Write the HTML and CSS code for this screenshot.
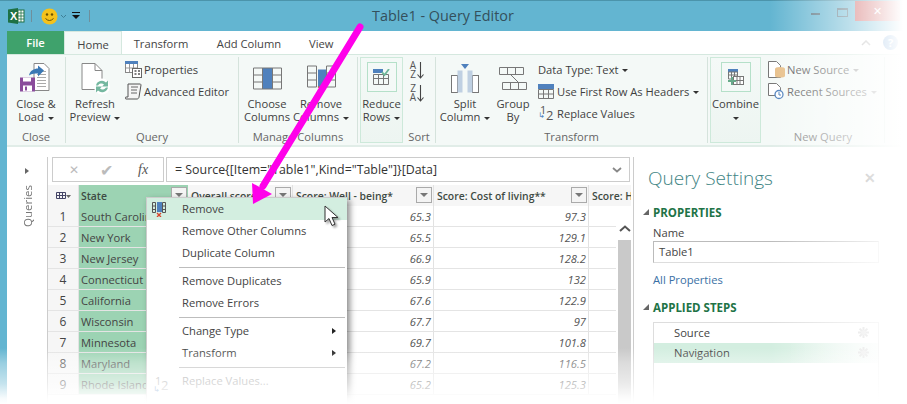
FILE: index.html
```html
<!DOCTYPE html>
<html lang="en">
<head>
<meta charset="utf-8">
<title>Table1 - Query Editor</title>
<link rel="stylesheet" href="styles.css">
</head>
<body>
<div class="window">
  <header class="titlebar">
    <div class="qat">
      <svg class="xl" width="17" height="16" viewBox="0 0 17 16"><rect x="7" y="2" width="9" height="12" fill="#fff" stroke="#1e7145"/><path d="M10 2v12M13 2v12M7 5h9M7 8h9M7 11h9" stroke="#1e7145" stroke-width=".8"/><path d="M0 1.500 10 0v16L0 14.500z" fill="#1e7145"/><text x="2" y="12" class="xl-x">X</text></svg>
      <i class="qat-sep"></i>
      <svg class="smile" width="17" height="17" viewBox="0 0 17 17"><circle cx="8.500" cy="8.500" r="8" fill="#f5c21b"/><circle cx="6" cy="6.500" r="1.200" fill="#6b5200"/><circle cx="11" cy="6.500" r="1.200" fill="#6b5200"/><path d="M4.500 10.500q4 4 8 0" fill="none" stroke="#6b5200" stroke-width="1"/></svg>
      <svg class="chev" width="7" height="5" viewBox="0 0 7 5"><path d="M1 1l2.500 2.500L6 1" fill="none" stroke="#3e7f96"/></svg>
      <svg class="qat-more" width="8" height="8" viewBox="0 0 8 8"><path d="M0 .5h8" stroke="#111"/><path d="M0 3h8L4 7z" fill="#111"/></svg>
      <i class="qat-sep qat-sep2"></i>
    </div>
    <div class="title">Table1 - Query Editor</div>
    <div class="winctl">
      <i class="min"></i><i class="max"></i><span class="close">✕</span>
    </div>
  </header>
  <div class="main">
    <nav class="tabs">
      <span class="tab file">File</span>
      <span class="tab home">Home</span>
      <span class="tab t-transform">Transform</span>
      <span class="tab t-add">Add Column</span>
      <span class="tab t-view">View</span>
      <span class="tabs-right">
        <svg width="10" height="6" viewBox="0 0 10 6"><path d="M1 5l4-4 4 4" fill="none" stroke="#aaa" stroke-width="1.500"/></svg>
        <span class="help">?</span>
      </span>
    </nav>
    <section class="ribbon">
      <div class="group g-close">
        <div class="gbody">
          <div class="big w58">
            <svg class="ico" width="32" height="32" viewBox="0 0 32 32"><path d="M14 1h10l5 5v22H14z" fill="#fff" stroke="#888"/><path d="M17 9h9M17 12h9M17 15h9M17 18h9M17 21h9M17 24h9" stroke="#aaa"/><path d="M9 13c1-5 5-7 9-7V3l6 5-6 6v-3c-3 0-6 0-9 2z" fill="#3a78b5"/><path d="M0 15h15v14H0z" fill="#8a4c9c"/><path d="M3 15h8v4H3zM3 23h9v6H3z" fill="#fff"/><path d="M5 24h2v4H5z" fill="#8a4c9c"/></svg>
            <span class="blabel">Close &amp;<br>Load <i class="caret"></i></span>
          </div>
        </div>
        <div class="glabel">Close</div>
      </div>
      <div class="group g-query">
        <div class="gbody">
          <div class="big w58">
            <svg class="ico" width="30" height="32" viewBox="0 0 30 32"><path d="M2 1h13l7 7v19H2z" fill="#fff" stroke="#888"/><path d="M15 1v7h7" fill="none" stroke="#888"/><circle cx="22" cy="24" r="8" fill="#fff"/><path d="M16 23a6 6 0 0 1 10-3l2-2v6h-6l2-2a4 4 0 0 0-6 1zM28 25a6 6 0 0 1-10 3l-2 2v-6h6l-2 2a4 4 0 0 0 6-1z" fill="#75b8a0"/></svg>
            <span class="blabel">Refresh<br>Preview <i class="caret"></i></span>
          </div>
          <div class="smalls">
            <div class="sitem"><svg width="17" height="17" viewBox="0 0 17 17"><rect x=".5" y=".5" width="12" height="11" fill="#fff" stroke="#888"/><rect x="0" y="0" width="13" height="3" fill="#4f81bd"/><path d="M4.500 3v8M8.500 3v8M1 7h11" stroke="#999"/><rect x="7.500" y="7.500" width="9" height="9" fill="#fff" stroke="#666"/><path d="M9.500 10h2M9.500 13h2M13 10h2M13 13h2" stroke="#555" stroke-width="1.500"/></svg><span>Properties</span></div>
            <div class="sitem"><svg width="17" height="17" viewBox="0 0 17 17"><path d="M3 14V1h12c1 0 1 1 1 1l-2 12c0 1-1 2-2 2H1c-1 0-1-2 0-2z" fill="#f5f5f5" stroke="#555"/><path d="M6 4h7M6 7h6M6 10h6" stroke="#666"/></svg><span>Advanced Editor</span></div>
          </div>
        </div>
        <div class="glabel">Query</div>
      </div>
      <div class="group g-manage">
        <div class="gbody">
          <div class="big w54">
            <svg class="ico" width="29" height="22" viewBox="0 0 29 22"><rect x="9.500" y=".5" width="10" height="21" fill="#4f81bd"/><path d="M.5.500h28v21H.5zM9.500.5v21M19.500.5v21M.5 7.500h9M.5 14.500h9M19.500 7.500h9M19.500 14.500h9" fill="none" stroke="#777"/></svg>
            <span class="blabel">Choose<br>Columns</span>
          </div>
          <div class="big w54">
            <svg class="ico" width="29" height="26" viewBox="0 0 29 26"><path d="M.5.500h9v21h-9zM.5 7.500h9M.5 14.500h9M19.500.500h9v21h-9zM19.500 7.500h9M19.500 14.500h9" fill="none" stroke="#777"/><rect x="11" y="4" width="8" height="18" fill="#4f81bd"/><path d="M11 21l5 4M16 21l-5 4" stroke="#d2603c" stroke-width="1.500"/></svg>
            <span class="blabel">Remove<br>Columns <i class="caret"></i></span>
          </div>
        </div>
        <div class="glabel">Manage Columns</div>
      </div>
      <div class="group g-reduce">
        <div class="hi-box"><svg width="17" height="16" viewBox="0 0 17 16"><rect y="0" width="10" height="4" fill="#4f81bd"/><path d="M.5 5.500h15v10H.5zM.5 9.500h15M5.500 5.500v10M10.500 5.500v10" fill="none" stroke="#777"/><path d="M9 3l2.500 3L16 0" fill="none" stroke="#6fb79a" stroke-width="1.800"/></svg></div>
        <span class="blabel reduce-label">Reduce<br>Rows <i class="caret"></i></span>
      </div>
      <div class="group g-sort">
        <div class="gbody sort-body">
          <div class="sortrow"><span class="az">A<br>Z</span><svg width="7" height="17" viewBox="0 0 7 17"><path d="M3.500 0v16M.5 12.500l3 3.500 3-3.500" fill="none" stroke="#444" stroke-width="1.100"/></svg></div>
          <div class="sortrow"><span class="az">Z<br>A</span><svg width="7" height="17" viewBox="0 0 7 17"><path d="M3.500 0v16M.5 12.500l3 3.500 3-3.500" fill="none" stroke="#444" stroke-width="1.100"/></svg></div>
        </div>
        <div class="glabel">Sort</div>
      </div>
      <div class="group g-transform">
        <div class="gbody">
          <div class="big w58">
            <svg class="ico" width="28" height="29" viewBox="0 0 28 29"><path d="M10 0h8l-4 5z" fill="#4f81bd"/><rect x=".5" y="11.500" width="6" height="17" fill="#fff" stroke="#777"/><rect x="21.500" y="11.500" width="6" height="17" fill="#fff" stroke="#777"/><rect x="6.500" y="6.500" width="5" height="22" fill="#bfd0e2"/><rect x="16.500" y="6.500" width="5" height="22" fill="#bfd0e2"/></svg>
            <span class="blabel">Split<br>Column <i class="caret"></i></span>
          </div>
          <div class="big w38">
            <svg class="ico" width="28" height="23" viewBox="0 0 28 23"><path d="M.5.500h24v7H.5zM8.500.5v7M16.500.5v7M3.500 15.500h24v7h-24zM11.500 15.500v7M19.500 15.500v7M12 8l7 7" fill="none" stroke="#777"/></svg>
            <span class="blabel">Group<br>By</span>
          </div>
          <div class="smalls s-tr">
            <div class="sitem"><span>Data Type: Text <i class="caret"></i></span></div>
            <div class="sitem"><svg width="16" height="15" viewBox="0 0 16 15"><rect width="16" height="5" fill="#4f81bd"/><path d="M.5 5.500h15v9H.5zM.5 10h15M5.500 5.500v9M10.500 5.500v9" fill="none" stroke="#777"/></svg><span>Use First Row As Headers <i class="caret"></i></span></div>
            <div class="sitem"><span class="onetwo"><em>1</em><u>↳</u><em>2</em></span><span>Replace Values</span></div>
          </div>
        </div>
        <div class="glabel">Transform</div>
      </div>
      <div class="group g-combine">
        <div class="hi-box"><svg width="16" height="16" viewBox="0 0 16 16"><rect width="10" height="3" fill="#4f81bd"/><path d="M.5 3h9v7h-9zM3.500 3v7M6.500 3v7M.5 6h9" fill="none" stroke="#777"/><rect x="5.500" y="7.500" width="10" height="8" fill="#fff" stroke="#777"/><path d="M9 7.500v8M12 7.500v8M5.500 11.500h10" stroke="#777"/><path d="M0 12h8M4 8v8" stroke="#67a98a" stroke-width="2"/></svg></div>
        <span class="blabel reduce-label">Combine<br><i class="caret"></i></span>
      </div>
      <div class="group g-new">
        <div class="gbody">
          <div class="smalls s-new">
            <div class="sitem"><svg width="17" height="18" viewBox="0 0 17 18"><path d="M.5 1.500h8l4 4v12h-12z" fill="#fff" stroke="#777"/><ellipse cx="12" cy="9" rx="5" ry="2" fill="#e8c08a"/><path d="M7 9h10v7c0 2-10 2-10 0z" fill="#e8c08a"/></svg><span>New Source <i class="caret"></i></span></div>
            <div class="sitem"><svg width="17" height="18" viewBox="0 0 17 18"><path d="M.5 1.500h8l4 4v8h-12z" fill="#fff" stroke="#777"/><circle cx="11" cy="12.500" r="4" fill="#fff" stroke="#4f81bd" stroke-width="1.300"/><path d="M11 10v3h2" stroke="#4f81bd" fill="none"/></svg><span>Recent Sources <i class="caret"></i></span></div>
          </div>
        </div>
        <div class="glabel faint">New Query</div>
      </div>
    </section>
    <div class="workspace">
      <aside class="queries">
        <i class="qarrow"></i>
        <span class="qlabel">Queries</span>
      </aside>
      <div class="center">
        <div class="formula">
          <div class="fxbox"><span class="fxx">✕</span><span class="fxc">✔</span><span class="fxf">fx</span></div>
          <div class="fxinput"><span>= Source{[Item="Table1",Kind="Table"]}[Data]</span><svg width="10" height="6" viewBox="0 0 10 6"><path d="M1 1l4 3.500L9 1" fill="none" stroke="#888" stroke-width="1.800"/></svg></div>
        </div>
        <div class="grid">
          <div class="row head">
            <div class="c num"><svg width="15" height="7" viewBox="0 0 15 7"><path d="M.5.500h9v6h-9zM3.500.5v6M6.500.5v6M.5 3.500h9" fill="none" stroke="#446"/><path d="M10 3h5l-2.500 3z" fill="#666"/></svg></div>
            <div class="c state"><b>State</b><i class="fbtn"></i></div>
            <div class="c overall"><b>Overall score*</b><i class="fbtn"></i></div>
            <div class="c well"><b>Score: Well - being*</b><i class="fbtn"></i></div>
            <div class="c cost"><b>Score: Cost of living**</b><i class="fbtn"></i></div>
            <div class="c last"><b>Score: Health</b></div>
          </div>
          <div class="row"><div class="c num">1</div><div class="c state">South Carolina</div><div class="c overall"></div><div class="c well v">65.3</div><div class="c cost v">97.3</div><div class="c last"></div></div>
          <div class="row"><div class="c num">2</div><div class="c state">New York</div><div class="c overall"></div><div class="c well v">65.5</div><div class="c cost v">129.1</div><div class="c last"></div></div>
          <div class="row"><div class="c num">3</div><div class="c state">New Jersey</div><div class="c overall"></div><div class="c well v">66.9</div><div class="c cost v">128.2</div><div class="c last"></div></div>
          <div class="row"><div class="c num">4</div><div class="c state">Connecticut</div><div class="c overall"></div><div class="c well v">65.9</div><div class="c cost v">132</div><div class="c last"></div></div>
          <div class="row"><div class="c num">5</div><div class="c state">California</div><div class="c overall"></div><div class="c well v">67.6</div><div class="c cost v">122.9</div><div class="c last"></div></div>
          <div class="row"><div class="c num">6</div><div class="c state">Wisconsin</div><div class="c overall"></div><div class="c well v">67.7</div><div class="c cost v">97</div><div class="c last"></div></div>
          <div class="row"><div class="c num">7</div><div class="c state">Minnesota</div><div class="c overall"></div><div class="c well v">69.7</div><div class="c cost v">101.8</div><div class="c last"></div></div>
          <div class="row"><div class="c num">8</div><div class="c state">Maryland</div><div class="c overall"></div><div class="c well v">67.2</div><div class="c cost v">116.5</div><div class="c last"></div></div>
          <div class="row"><div class="c num">9</div><div class="c state">Rhode Island</div><div class="c overall"></div><div class="c well v">65.2</div><div class="c cost v">125.3</div><div class="c last"></div></div>
          <div class="scrollbar"><svg width="12" height="7" viewBox="0 0 12 7"><path d="M1 6l5-4.500L11 6" fill="none" stroke="#555" stroke-width="2"/></svg><i class="thumb"></i></div>
          <div class="menu">
            <div class="mi on"><svg class="micon" width="14" height="15" viewBox="0 0 14 15"><path d="M.5.500h3v10h-3zM.5 4h3M.5 7.500h3M10.500.500h3v10h-3zM10.500 4h3M10.500 7.500h3" fill="none" stroke="#555"/><rect x="5" y="0" width="5" height="10" fill="#4f81bd"/><path d="M5 11l4 4M9 11l-4 4" stroke="#d8442c" stroke-width="1.300"/></svg>Remove</div>
            <div class="mi">Remove Other Columns</div>
            <div class="mi">Duplicate Column</div>
            <hr>
            <div class="mi">Remove Duplicates</div>
            <div class="mi">Remove Errors</div>
            <hr>
            <div class="mi">Change Type<i class="sub"></i></div>
            <div class="mi">Transform<i class="sub"></i></div>
            <hr>
            <div class="mi off"><span class="micon onetwo big12"><em>1</em><u>↳</u><em>2</em></span>Replace Values...</div>
          </div>
        </div>
      </div>
      <aside class="settings">
        <div class="st-head"><span>Query Settings</span><span class="st-x">✕</span></div>
        <div class="sec"><i class="tri"></i>PROPERTIES</div>
        <label class="namelabel">Name</label>
        <div class="nameinput">Table1</div>
        <div class="allprops">All Properties</div>
        <div class="sec sec2"><i class="tri"></i>APPLIED STEPS</div>
        <div class="steps">
          <div class="step">Source<svg class="gear" width="11" height="11" viewBox="0 0 11 11"><path d="M5.500 0v11M0 5.500h11M1.600 1.600l7.800 7.800M9.400 1.600l-7.800 7.800" stroke="#ccc" stroke-width="2"/><circle cx="5.500" cy="5.500" r="2.500" fill="#ddd"/></svg></div>
          <div class="step sel">Navigation<svg class="gear" width="11" height="11" viewBox="0 0 11 11"><path d="M5.500 0v11M0 5.500h11M1.600 1.600l7.800 7.800M9.400 1.600l-7.800 7.800" stroke="#ccc" stroke-width="2"/><circle cx="5.500" cy="5.500" r="2.500" fill="#ddd"/></svg></div>
        </div>
      </aside>
    </div>
  </div>
</div>
<div class="fade-right"></div>
<div class="fade-bottom"></div>
<svg class="annot" width="907" height="404" viewBox="0 0 907 404">
  <path d="M360 27 263 186" stroke="#ff00ea" stroke-width="7" stroke-linecap="round" fill="none"/>
  <path d="M253 204 252 183 272 194z" fill="#ff00ea"/>
</svg>
<svg class="pointer" width="16" height="22" viewBox="0 0 16 22"><path d="M1 1v16l4-3.500 3 7 3-1.300-3-6.700h6z" fill="#fff" stroke="#333" stroke-width="1"/></svg>
</body>
</html>
```

FILE: styles.css
```css
* { box-sizing: border-box; }
html, body { margin: 0; padding: 0; width: 907px; height: 404px; overflow: hidden; background: #fff; }
body { font-family: "Open Sans", "Noto Sans", sans-serif; font-size: 11.2px; color: #444; position: relative; }
i, em, u { font-style: normal; text-decoration: none; }

.window { width: 907px; height: 404px; background: #63b5d1; border-top: 1px solid #4b94ab; display: flex; flex-direction: column; padding: 0 0 0 7px; overflow: hidden; }
.titlebar { height: 30px; flex: none; display: flex; align-items: center; position: relative; }
.qat { display: flex; align-items: center; width: 250px; padding-left: 1px; }
.qat-sep { width: 1px; height: 12px; background: #6e8f9c; margin: 0 9px 0 6px; }
.qat-sep2 { margin: 0 0 0 9px; }
.chev { margin: 0 0 0 2px; }
.qat-more { margin-left: 5px; }
.xl-x { font: bold 11px "Liberation Sans", sans-serif; fill: #fff; }
.title { position: absolute; left: 365px; top: 5px; font-size: 14.4px; color: #34505c; white-space: nowrap; }
.winctl { position: absolute; left: 801px; top: 0; display: flex; align-items: flex-start; }
.min { width: 9px; height: 2px; background: #55707d; margin: 12px 0 0 3px; }
.max { width: 11px; height: 9px; border: 1px solid #55707d; border-top-width: 2px; margin: 7px 0 0 17px; }
.close { width: 45px; height: 20px; background: #c75050; color: #fff; font-size: 11px; text-align: center; line-height: 20px; margin-left: 7px; display: block; }

.main { flex: 1; background: #fff; display: flex; flex-direction: column; min-height: 0; }
.tabs { height: 23px; flex: none; display: flex; background: #fff; align-items: stretch; font-size: 11.2px; }
.tab { display: flex; align-items: center; justify-content: center; color: #444; padding-top: 2px; }
.file { width: 57px; background: #3fa26c; color: #fff; padding-top: 0; font-weight: 600; }
.home { width: 58px; background: #f4f9f7; border: 1px solid #d5e8df; border-bottom: 0; }
.t-transform { width: 78px; }
.t-add { width: 98px; }
.t-view { width: 58px; justify-content: flex-start; padding-left: 11px; }
.tabs-right { margin-left: auto; width: 106px; display: flex; align-items: center; gap: 12px; padding-left: 60px; }
.help { width: 15px; height: 15px; border-radius: 50%; background: #4f8fd0; color: #fff; text-align: center; line-height: 15px; font-weight: 700; font-size: 11px; }

.ribbon { height: 93px; flex: none; background: #f4f9f7; border-top: 1px solid #d5e8df; border-bottom: 2px solid #e1ede8; display: flex; padding-top: 2px; }
.group { display: flex; flex-direction: column; border-right: 1px solid #d5e3dc; height: 86px; flex: none; position: relative; }
.gbody { flex: 1; display: flex; min-height: 0; }
.glabel { height: 20px; padding-top: 5px; text-align: center; color: #666; line-height: 17px; white-space: nowrap; }
.faint { color: #888; }
.big { display: flex; flex-direction: column; align-items: center; flex: none; text-align: center; }
.w58 { width: 58px; } .w54 { width: 54px; } .w38 { width: 38px; }
.ico { height: 33px; margin-top: 5px; margin-bottom: 2px; flex: none; }
.blabel { line-height: 13px; display: block; color: #3f3f3f; white-space: nowrap; }
.caret { display: inline-block; width: 0; height: 0; border: 3px solid transparent; border-top: 3px solid #333; border-bottom: 0; vertical-align: middle; margin-left: 1px; }
.smalls { display: flex; flex-direction: column; }
.sitem { height: 22px; flex: none; display: flex; align-items: center; gap: 3px; white-space: nowrap; color: #3f3f3f; }
.g-close { width: 59px; }
.g-query { width: 173px; }
.g-query .smalls { padding-left: 1px; padding-top: 1px; }
.g-query .sitem { gap: 2px; }
.g-manage { width: 119px; }
.g-manage .gbody { padding-left: 1px; }
.g-reduce { width: 43px; margin-left: 2px; border: 1px solid #cde9da; background: linear-gradient(#f4f9f7, #edf5f1); align-items: center; }
.hi-box { width: 30px; height: 30px; border: 1px solid #b5e0c9; margin-top: 4px; margin-bottom: 5px; display: flex; align-items: center; justify-content: center; flex: none; background: #f4f9f7; }
.reduce-label { text-align: center; }
.g-sort { width: 33px; }
.sort-body { flex-direction: column; align-items: center; padding: 4px 4px 0 0; gap: 5px; }
.sortrow { display: flex; align-items: center; height: 18px; flex: none; }
.az { font-size: 10px; line-height: 9px; color: #555; text-align: center; margin-right: 1px; }
.g-transform { width: 272px; }
.s-tr { padding-left: 6px; padding-top: 1px; }
.onetwo { position: relative; display: block; width: 16px; height: 17px; color: #555; font-size: 9px; flex: none; }
.onetwo em:first-child { position: absolute; left: 2px; top: -3px; font-size: 11px; }
.onetwo em:last-child { position: absolute; left: 8px; top: 1px; font-size: 13px; }
.onetwo u { position: absolute; left: 0; top: 6px; color: #4f81bd; font-family: "DejaVu Sans", sans-serif; font-size: 8px; }
.g-combine { width: 51px; margin-left: 2px; border: 1px solid #cde9da; align-items: center; background: linear-gradient(#f4f9f7, #edf5f1); }
.g-new { width: 123px; margin-left: 1px; }
.s-new { padding-left: 6px; padding-top: 1px; color: #777; }
.s-new .sitem { color: #5f5f5f; gap: 2px; }
.s-new .caret { border-top-color: #999; }

.workspace { flex: 1; display: flex; min-height: 0; }
.queries { width: 41px; flex: none; border-right: 1px solid #ccc; margin-top: 10px; display: flex; flex-direction: column; align-items: center; padding-top: 11px; }
.qarrow { width: 0; height: 0; border: 3px solid transparent; border-left: 4px solid #666; border-right: 0; }
.qlabel { writing-mode: vertical-rl; transform: rotate(180deg); color: #777; margin-top: 11px; font-size: 11.5px; }
.center { width: 585px; flex: none; display: flex; flex-direction: column; position: relative; padding: 10px 2px 0 0; overflow: hidden; }
.formula { display: flex; height: 25px; flex: none; padding-left: 4px; gap: 2px; margin-right: 1px; }
.fxbox { width: 112px; border: 1px solid #ccc; display: flex; align-items: center; padding-left: 16px; color: #bbb; }
.fxx { width: 31px; font-size: 12px; }
.fxc { width: 38px; font-size: 16px; color: #bbb; }
.fxf { font-family: "Liberation Serif", serif; font-style: italic; color: #555; font-size: 14px; }
.fxinput { flex: 1; border: 1px solid #ccc; display: flex; align-items: center; justify-content: space-between; padding: 0 7px 0 8px; color: #333; font-size: 12.4px; }
.grid { margin-top: 3px; position: relative; flex: 1; }
.row { display: flex; height: 21px; border-bottom: 1px solid #e4e4e4; }
.row.head { background: #f6f6f6; border-bottom: 0; }
.c { flex: none; border-right: 1px solid #e2e2e2; padding: 0 3px; white-space: nowrap; overflow: hidden; display: flex; align-items: center; position: relative; color: #444; }
.num { width: 31px; background: #f6f6f6; justify-content: center; font-size: 12px; color: #444; }
.state { width: 109px; background: #9cd3b3; border-right: 0; padding-left: 2px; }
.overall { width: 105px; }
.well { width: 141px; }
.cost { width: 155px; }
.last { width: 42px; border-right: 0; }
.v { justify-content: flex-end; font-style: italic; color: #555; padding-right: 2px; }
.head b { font-weight: 600; font-size: 10.4px; color: #3e4b44; flex: none; }
.fbtn { position: absolute; right: 1px; top: 2px; width: 16px; height: 16px; background: #f4f4f4; border: 1px solid #aaa; }
.fbtn::after { content: ""; position: absolute; left: 3px; top: 5px; border: 4px solid transparent; border-top: 4px solid #777; border-bottom: 0; }
.scrollbar { position: absolute; left: 568px; top: 21px; bottom: 0; width: 15px; background: #fff; display: flex; flex-direction: column; align-items: center; padding: 19px 0 0 2px; }
.thumb { width: 13px; flex: 1; background: #c9c9c9; margin-top: 8px; }
.menu { position: absolute; left: 98px; top: 12px; width: 201px; background: #fff; border: 1px solid #ccc; border-right: 0; box-shadow: 3px 3px 6px rgba(0,0,0,.45); z-index: 2; padding-bottom: 30px; }
.mi { height: 22px; line-height: 22px; padding-left: 35px; position: relative; color: #444; }
.mi.on { background: #d3eee0; }
.mi.off { color: #999; }
.menu hr { border: 0; height: 1px; background: #bdbdbd; margin: 3px 2px 2px 32px; }
.micon { position: absolute; left: 5px; top: 4px; }
.big12 { left: 6px; top: 3px; width: 16px; color: #aaa; }
.sub { position: absolute; right: 11px; top: 8px; border: 3.500px solid transparent; border-left: 4px solid #222; border-right: 0; }

.settings { flex: 1; border-left: 1px solid #ccc; margin-top: 10px; padding: 0 0 0 9px; position: relative; }
.st-head { display: flex; justify-content: space-between; align-items: center; width: 236px; margin-top: 6px; padding: 0 3px 0 5px; font-size: 19px; font-weight: 300; color: #3f8585; height: 29px; }
.st-x { font-size: 14px; font-weight: 700; color: #777; }
.sec { font-weight: 700; color: #217346; font-size: 11.5px; padding-left: 10px; margin-top: 12px; height: 17px; line-height: 17px; position: relative; }
.sec2 { margin-top: 11px; }
.tri { position: absolute; left: 0; top: 5px; border-style: solid; border-width: 0 0 6px 6px; border-color: transparent transparent #666 transparent; }
.namelabel { display: block; margin: 4px 0 0 10px; height: 16px; line-height: 16px; color: #444; }
.nameinput { margin: 0 0 0 10px; width: 226px; height: 22px; border: 1px solid #ddd; border-top-color: #bbb; border-left-color: #bbb; line-height: 20px; padding-left: 5px; color: #444; }
.allprops { margin: 8px 0 0 10px; color: #3970a4; height: 17px; line-height: 17px; }
.steps { margin: 6px 0 0 10px; width: 226px; height: 90px; border: 1px solid #ddd; }
.step { height: 20px; line-height: 20px; padding-left: 20px; position: relative; color: #444; }
.step.sel { background: linear-gradient(90deg, #d3eee0 60%, #f4faf7); }
.gear { position: absolute; right: 9px; top: 4px; }

.fade-right { position: absolute; z-index: 5; left: 770px; top: 0; width: 137px; height: 404px; background: linear-gradient(90deg, rgba(255,255,255,0), rgba(255,255,255,.6) 60%, #fff 97%); pointer-events: none; }
.fade-bottom { position: absolute; z-index: 5; left: 0; top: 348px; width: 907px; height: 56px; background: linear-gradient(rgba(255,255,255,0), rgba(255,255,255,.35) 27%, rgba(255,255,255,.62) 63%, rgba(255,255,255,.95) 90%, #fff); pointer-events: none; }
.annot { position: absolute; z-index: 6; left: 0; top: 0; pointer-events: none; }
.pointer { position: absolute; z-index: 6; left: 324px; top: 205px; filter: drop-shadow(2px 2px 1px rgba(0,0,0,.35)); }
```
